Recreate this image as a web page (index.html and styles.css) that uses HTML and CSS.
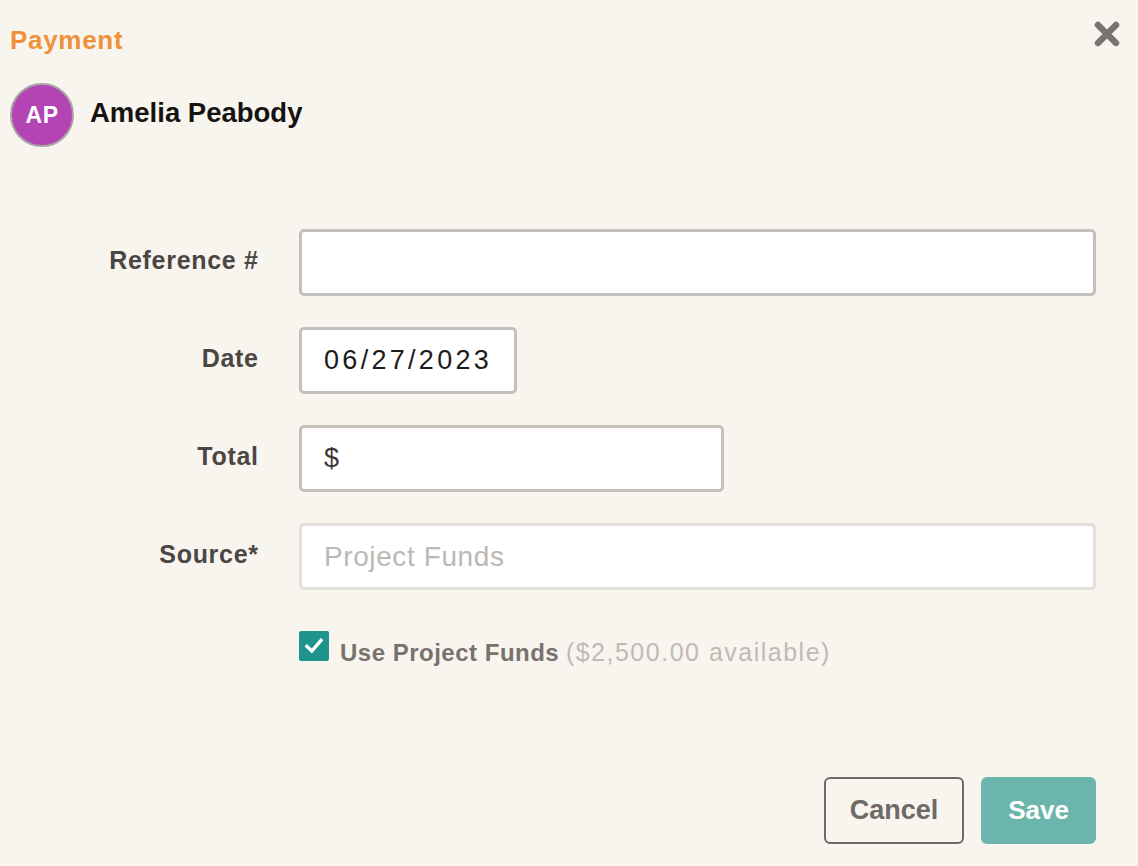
FILE: index.html
```html
<!DOCTYPE html>
<html lang="en">
<head>
<meta charset="utf-8">
<title>Payment</title>
<link rel="stylesheet" href="styles.css">
</head>
<body>
<div class="dialog">
  <header class="header">
    <h1 class="title">Payment</h1>
    <button class="close" type="button" aria-label="Close">
      <svg width="26" height="26" viewBox="0 0 26 26"><path d="M4 4 L22 22 M22 4 L4 22" stroke="#777573" stroke-width="6.5" stroke-linecap="round" fill="none"/></svg>
    </button>
  </header>

  <div class="person">
    <div class="avatar">AP</div>
    <div class="name">Amelia Peabody</div>
  </div>

  <form class="form">
    <label class="label">Reference #</label>
    <input class="field field-wide" type="text" value="">

    <label class="label">Date</label>
    <input class="field field-date" type="text" value="06/27/2023">

    <label class="label">Total</label>
    <input class="field field-total" type="text" value="$">

    <label class="label">Source*</label>
    <input class="field field-wide field-light" type="text" placeholder="Project Funds">

    <div class="check-row">
      <span class="checkbox">
        <svg width="30" height="30" viewBox="0 0 30 30"><path d="M8 15.5 L12.8 20 L22 9.5" stroke="#fff" stroke-width="3.4" fill="none" stroke-linecap="square"/></svg>
      </span>
      <span class="check-text"><strong class="check-strong">Use Project Funds</strong> <span class="check-note">($2,500.00 available)</span></span>
    </div>
  </form>

  <div class="actions">
    <button class="btn btn-cancel" type="button">Cancel</button>
    <button class="btn btn-save" type="button">Save</button>
  </div>
</div>
</body>
</html>
```

FILE: styles.css
```css
* { box-sizing: border-box; }

html, body {
  margin: 0;
  padding: 0;
  background: #f8f5ef;
  font-family: "Liberation Sans", Arial, sans-serif;
}

.dialog {
  width: 1138px;
  height: 866px;
  padding-left: 10px;
}

.header {
  display: flex;
  justify-content: space-between;
  align-items: flex-start;
  padding-top: 21px;
  padding-right: 18px;
}

.title {
  margin: 5px 0 0 0;
  font-size: 26px;
  line-height: 28px;
  font-weight: 700;
  color: #ef9139;
  letter-spacing: 0.7px;
}

.close {
  border: 0;
  background: transparent;
  padding: 0;
  margin: 0;
  width: 26px;
  height: 26px;
  display: block;
}
.close svg { display: block; }

.person {
  display: flex;
  align-items: center;
  gap: 16px;
  margin-top: 29px;
}

.avatar {
  width: 64px;
  height: 64px;
  border-radius: 50%;
  background: #b443b4;
  border: 2px solid #a9a3a6;
  color: #fff;
  font-weight: 700;
  font-size: 23px;
  display: flex;
  align-items: center;
  justify-content: center;
  letter-spacing: 0.5px;
}

.name {
  font-size: 27.5px;
  font-weight: 700;
  color: #151312;
  padding-bottom: 5px;
}

.form {
  display: grid;
  grid-template-columns: 248px 1fr;
  column-gap: 41px;
  row-gap: 31px;
  margin-top: 82px;
  padding-right: 42px;
  align-items: center;
}

.label {
  text-align: right;
  font-size: 25px;
  line-height: 28px;
  font-weight: 700;
  color: #4b4643;
  letter-spacing: 0.7px;
  margin-right: -0.7px;
  padding-bottom: 6px;
}

.field {
  height: 67px;
  border: 3px solid #c5c0bb;
  border-radius: 5px;
  background: #fff;
  padding: 0 22px;
  font-family: "Liberation Sans", Arial, sans-serif;
  font-size: 27px;
  color: #1d1b1a;
  outline: none;
  margin: 0;
}

.field-wide { width: 100%; }
.field-date { width: 218px; letter-spacing: 3.3px; }
.field-total { width: 425px; color: #3b3836; }
.field-light { border-color: #e3dfdc; font-size: 28px; letter-spacing: 0.6px; }
.field-light::placeholder { color: #bdb8b4; opacity: 1; }

.check-row {
  grid-column: 2;
  display: flex;
  align-items: flex-start;
  gap: 11px;
  height: 30px;
  margin-top: 10px;
}

.checkbox {
  width: 30px;
  height: 30px;
  border-radius: 2px;
  background: #1f948c;
  display: block;
  flex: none;
}
.checkbox svg { display: block; }

.check-text {
  padding-top: 6px;
  font-size: 24px;
  line-height: 30px;
  white-space: nowrap;
}

.check-strong {
  font-size: 24px;
  font-weight: 700;
  color: #77726e;
  letter-spacing: 0.5px;
}

.check-note {
  color: #bfbab6;
  font-size: 25px;
  letter-spacing: 1.5px;
}

.actions {
  display: flex;
  justify-content: flex-end;
  gap: 17px;
  margin-top: 116px;
  padding-right: 42px;
}

.btn {
  height: 67px;
  border-radius: 6px;
  font-family: "Liberation Sans", Arial, sans-serif;
  font-weight: 700;
  padding: 0;
  margin: 0;
}

.btn-cancel {
  width: 140px;
  border: 2px solid #6e6966;
  background: transparent;
  color: #6e6966;
  font-size: 27px;
}

.btn-save {
  width: 115px;
  border: 0;
  background: #6bb5ad;
  color: #fff;
  font-size: 26px;
}
```
